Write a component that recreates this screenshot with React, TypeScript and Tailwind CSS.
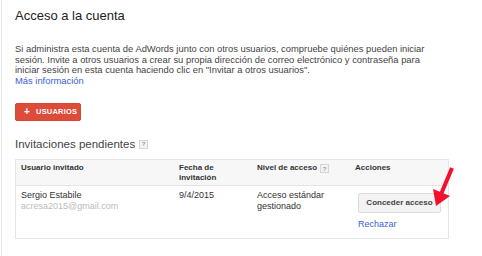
import React from 'react';

const HelpBox: React.FC = () => (
  <span className="inline-flex items-center justify-center w-[9px] h-[9px] border border-[#d5d5d5] bg-[#f3f3f3] text-[6px] leading-none text-[#999] font-bold align-middle">
    ?
  </span>
);

const App: React.FC = () => {
  return (
    <div className="w-[482px] h-[256px] bg-white overflow-hidden relative" style={{ fontFamily: '"Liberation Sans", Arial, sans-serif' }}>
      <div className="ml-px h-full border-l border-[#e8e8e8] pl-[13px] pt-[8px]">
        <h1 className="text-[13px] leading-[16px] text-[#222]">Acceso a la cuenta</h1>

        <p className="mt-[20px] text-[9.4px] leading-[10.5px] text-[#444] whitespace-nowrap">
          Si administra esta cuenta de AdWords junto con otros usuarios, compruebe quiénes pueden iniciar
          <br />
          sesión. Invite a otros usuarios a crear su propia dirección de correo electrónico y contraseña para
          <br />
          iniciar sesión en esta cuenta haciendo clic en "Invitar a otros usuarios".
          <br />
          <a className="text-[#3b62d6]">Más información</a>
        </p>

        <button className="mt-[17px] flex items-center gap-[6px] h-[18px] w-[66px] pl-[8px] rounded-[2px] bg-[#dd4b39] border border-[#d14836] text-white text-[7.5px] font-bold tracking-[0.2px]">
          <span className="text-[10px] leading-none font-bold">+</span>
          USUARIOS
        </button>

        <h2 className="mt-[16px] flex items-center gap-[4px] text-[11.5px] leading-[14px] text-[#444]">
          Invitaciones pendientes <HelpBox />
        </h2>

        <div className="mt-[8px] w-[434px] border border-[#e5e5e5]">
          <div className="grid grid-cols-[158px_78px_98px_1fr] bg-[#f7f7f7] border-b border-[#e5e5e5] h-[26px] text-[8px] leading-[9.5px] font-bold text-[#333]">
            <div className="pl-[5px] pt-[3px]">Usuario invitado</div>
            <div className="pl-[5px] pt-[3px]">Fecha de<br />invitación</div>
            <div className="pl-[5px] pt-[3px] flex items-start gap-[3px]">
              Nivel de acceso <span className="mt-[1px]"><HelpBox /></span>
            </div>
            <div className="pl-[5px] pt-[3px]">Acciones</div>
          </div>
          <div className="grid grid-cols-[158px_78px_98px_1fr] h-[52px] text-[9px] leading-[10.5px] text-[#333]">
            <div className="pl-[5px] pt-[4px]">
              <div>Sergio Estabile</div>
              <div className="text-[#bbb]">acresa2015@gmail.com</div>
            </div>
            <div className="pl-[5px] pt-[4px]">9/4/2015</div>
            <div className="pl-[5px] pt-[4px]">Acceso estándar<br />gestionado</div>
            <div className="pl-[8px] pt-[7px] flex flex-col items-start">
              <button className="h-[20px] w-[83px] rounded-[2px] border border-[#dcdcdc] bg-[#f3f3f3] text-[8px] font-bold text-[#444]">
                Conceder acceso
              </button>
              <a className="mt-[6px] text-[#3b62d6]">Rechazar</a>
            </div>
          </div>
        </div>
      </div>

      <svg className="absolute left-[428px] top-[164px]" width="28" height="46" viewBox="0 0 28 46">
        <line x1="24" y1="4" x2="13.5" y2="29" stroke="#f2102c" strokeWidth="4" />
        <polygon points="8,42 5,25 22,32" fill="#f2102c" />
      </svg>
    </div>
  );
};

export default App;
